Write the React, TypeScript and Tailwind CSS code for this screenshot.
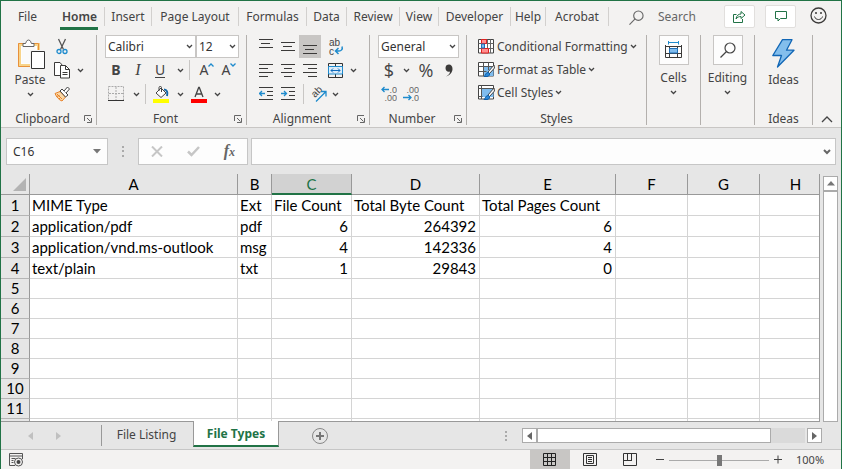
import { ReactNode, useState } from "react";

const TABS = [
  { name: "File", width: "w-[54px]" },
  { name: "Home", width: "w-[50px]", active: true },
  { name: "Insert", width: "w-[47px]" },
  { name: "Page Layout", width: "w-[87px]" },
  { name: "Formulas", width: "w-[68px]" },
  { name: "Data", width: "w-[40px]" },
  { name: "Review", width: "w-[53px]" },
  { name: "View", width: "w-[39px]" },
  { name: "Developer", width: "w-[72px]" },
  { name: "Help", width: "w-[35px]" },
  { name: "Acrobat", width: "w-[63px]" },
];

const COLUMNS = ["A", "B", "C", "D", "E", "F", "G", "H"];

const ROWS = [
  ["MIME Type", "Ext", "File Count", "Total Byte Count", "Total Pages Count"],
  ["application/pdf", "pdf", "6", "264392", "6"],
  ["application/vnd.ms-outlook", "msg", "4", "142336", "4"],
  ["text/plain", "txt", "1", "29843", "0"],
  [],
  [],
  [],
  [],
  [],
  [],
  [],
];

function Chevron() {
  return (
    <svg width="7" height="5" viewBox="0 0 7 5" fill="none" className="shrink-0">
      <path d="M1 1l2.500 2.500L6 1" stroke="#444" strokeWidth="1.300" />
    </svg>
  );
}

function Divider() {
  return <div className="h-5 w-px shrink-0 bg-[#c8c6c4]" />;
}

function Tool({
  label,
  width = "w-[22px]",
  children,
}: {
  label: string;
  width?: string;
  children: ReactNode;
}) {
  return (
    <button
      aria-label={label}
      className={`flex h-full shrink-0 items-center justify-center ${width}`}
    >
      {children}
    </button>
  );
}

function Group({
  label,
  width,
  launcher,
  children,
}: {
  label?: string;
  width: string;
  launcher?: boolean;
  children: ReactNode;
}) {
  return (
    <section className={`flex flex-col border-r border-[#b3b0ad] ${width}`}>
      <div className="h-[78px]">{children}</div>
      <div className="flex h-3 items-center">
        <div className="flex-1 text-center leading-3">{label}</div>
        {launcher && (
          <button aria-label={`${label} settings`} className="mr-1">
            <svg width="8" height="8" viewBox="0 0 8 8" fill="none" stroke="#666">
              <path d="M.5 6V.5H7M3 3l3.500 3.500M7.500 3v4.500H3" />
            </svg>
          </button>
        )}
      </div>
    </section>
  );
}

function Lines({ rows }: { rows: [number, number, number][] }) {
  return (
    <svg width="14" height="15" viewBox="0 0 14 15" stroke="#3b3a39">
      {rows.map(([x1, x2, y]) => (
        <path key={y} d={`M${x1} ${y + 0.5}H${x2}`} />
      ))}
    </svg>
  );
}

function PasteIcon() {
  return (
    <svg width="28" height="31" viewBox="0 0 28 31" fill="none" className="ml-1">
      <path d="M1.500 5.500h19v21h-19z" fill="#fff" stroke="#f8d48a" strokeWidth="3" />
      <path d="M.5 4.500h20v23H.5z" stroke="#e8913a" />
      <path d="M3.500 7.500h14v17h-14z" fill="#fafafa" />
      <path d="M5 7.500v-3h2.500c.5 0 .5-3.500 3-3.500s2.500 3.500 3 3.500H16v3z" fill="#fff" stroke="#666" />
      <path d="M12 11h16v20H12z" fill="#f3f2f1" />
      <path d="M13.500 12.500h13v17h-13z" fill="#fff" stroke="#333" />
    </svg>
  );
}

function CutIcon() {
  return (
    <svg width="12" height="17" viewBox="0 0 12 17" fill="none">
      <path d="M2.500 1l5 10.500M9.500 1l-5 10.500" stroke="#555" strokeWidth="1.300" />
      <circle cx="3" cy="13.500" r="2" stroke="#1e8bcd" strokeWidth="1.300" />
      <circle cx="9" cy="13.500" r="2" stroke="#1e8bcd" strokeWidth="1.300" />
    </svg>
  );
}

function CopyIcon() {
  return (
    <svg width="17" height="17" viewBox="0 0 17 17" fill="#fff" stroke="#3b3a39">
      <path d="M8.500 3.500L6 .5H.5v13h6" />
      <path d="M6.500 3.500h5l4 4v8.500h-9z" />
      <path d="M11.500 3.500v4h4M8.500 10.500h5M8.500 12.500h5" fill="none" />
    </svg>
  );
}

function BrushIcon() {
  return (
    <svg width="17" height="16" viewBox="0 0 17 16" fill="none">
      <path d="M1 7.500l5-2 5.500 5.500-3.500 4C5 14 2.500 11 1 7.500z" fill="#fbd9a6" stroke="#e8822a" />
      <path d="M3 8l5 5M2.500 10.500l3-1M5 13l2-2" stroke="#e8822a" />
      <path d="M6 5l2-2 6 6-2.500 2z" fill="#fff" stroke="#444" />
      <path d="M10 5l3.500-4 2 2L12 7" fill="#fff" stroke="#444" />
    </svg>
  );
}

function BordersIcon() {
  return (
    <svg width="16" height="16" viewBox="0 0 16 16" stroke="#aaa">
      <path d="M.5.5h15v14H.5zM8 1v13M1 7.500h14" fill="none" strokeDasharray="2 1" />
      <path d="M0 14.500h16" stroke="#333" />
    </svg>
  );
}

function BucketIcon() {
  return (
    <svg width="16" height="17" viewBox="0 0 16 17" fill="none">
      <path d="M3 7l5-5 5 5-5 4.500z" fill="#fff" stroke="#444" />
      <path d="M6 5V1.500c0-1.500 2.500-1.500 2.500 0V6" stroke="#444" />
      <path d="M11 3.500c3 0 4 3 3 6.500" stroke="#1569a8" strokeWidth="2" />
      <path d="M0 13h16v4H0z" fill="#ff0" />
    </svg>
  );
}

function FontColorIcon() {
  return (
    <svg width="16" height="17" viewBox="0 0 16 17" fill="none">
      <path d="M4 11L7.700 1.500h.6L12 11M5.200 8h5.600" stroke="#444" strokeWidth="1.300" />
      <path d="M0 13h16v4H0z" fill="red" />
    </svg>
  );
}

function WrapIcon() {
  return (
    <svg width="16" height="20" viewBox="0 0 16 20" fill="none" className="font-['Liberation_Sans',sans-serif] text-[10px]">
      <text x="1" y="9" fill="#444">ab</text>
      <text x="1" y="18" fill="#444">c</text>
      <path d="M14 9.500c1 3-1 4.500-3 4.500H7.500M10.500 11l-3 3 3 3" stroke="#1e8bcd" strokeWidth="1.500" />
    </svg>
  );
}

function MergeIcon() {
  return (
    <svg width="15" height="15" viewBox="0 0 15 15" fill="none" stroke="#333">
      <path d="M.5.5h14v14H.5zM7.500 0v4M7.500 11v4" />
      <path d="M.5 3.500h14v7.500H.5z" fill="#dcecf9" stroke="#1e8bcd" />
      <path d="M3 7.500h9M5 5.500l-2 2 2 2M10 5.500l2 2-2 2" stroke="#0f6cbd" />
    </svg>
  );
}

function IndentIcon({ decrease }: { decrease?: boolean }) {
  return (
    <svg width="14" height="14" viewBox="0 0 14 14" fill="none" stroke="#3b3a39">
      <path d="M0 .5h14M8 4.500h6M8 8.500h6M0 12.500h14" />
      <path
        d={decrease ? "M6 6.500H.5M3 4L.5 6.500 3 9" : "M0 6.500h5.500M3 4l2.500 2.500L3 9"}
        stroke="#1e8bcd"
        strokeWidth="1.300"
      />
    </svg>
  );
}

function OrientationIcon() {
  return (
    <svg width="22" height="22" viewBox="0 0 22 22" fill="none" className="shrink-0 font-['Liberation_Sans',sans-serif] text-[10px]">
      <text fill="#444" transform="translate(8 15) rotate(-45)">ab</text>
      <path d="M9 18.500L18.500 9M14 8.500h5v5" stroke="#1e8bcd" strokeWidth="1.300" />
    </svg>
  );
}

function DecimalIcon({ increase }: { increase?: boolean }) {
  return (
    <svg width="16" height="20" viewBox="0 0 16 20" fill="none" className="font-['Liberation_Sans',sans-serif] text-[9px]">
      <text x="16" y="9" textAnchor="end" fill="#666">{increase ? ".0" : ".00"}</text>
      <text x="16" y="17" textAnchor="end" fill="#666">{increase ? ".00" : ".0"}</text>
      <path
        d={increase ? "M8 5.500H1M3.500 3L1 5.500 3.500 8" : "M0 13.500h8M5.500 11L8 13.500 5.500 16"}
        stroke="#1e8bcd"
        strokeWidth="1.300"
      />
    </svg>
  );
}

function ConditionalIcon() {
  return (
    <svg width="16" height="15" viewBox="0 0 16 15" fill="none">
      <path d="M.5.5h15v13.500H.5z" fill="#fff" stroke="#444" />
      <path d="M3.500.5V14M9.500.5V14M12.500.5V14M.5 4.500h15M.5 9.500h15" stroke="#666" />
      <path d="M3.500.5h5v4h-5zM3.500 9.500h7V14h-7z" fill="#ff8f8f" stroke="#e02020" />
      <path d="M3.500 5h3v4h-3z" fill="#7fbcee" stroke="#1e6fb8" />
    </svg>
  );
}

function TableStyleIcon({ full }: { full?: boolean }) {
  return (
    <svg width="17" height="15" viewBox="0 0 17 15" fill="none">
      <path d="M.5.5h15v13.500H.5z" fill="#fff" stroke="#444" />
      <path d={full ? "M3 3.500h12.500V12H3z" : "M5.500 4.500h10V14h-10z"} fill="#7fbcee" />
      <path d={full ? "M3.500.5V14M.5 3.500h15M.5 11.500h4" : "M5.500.5V14M10.500.5V8M.5 4.500h15M.5 9.500h8"} stroke="#555" />
      <path d="M16 3l-6 7 1.500 1.500L16.500 6z" fill="#fff" stroke="#444" />
      <path d="M6 14.500c1.500-1 1.500-4 4-4s2 4-1 4z" fill="#2b88d8" stroke="#0f5ea8" />
    </svg>
  );
}

function CellsIcon() {
  return (
    <svg width="17" height="18" viewBox="0 0 17 18" fill="none">
      <path d="M4 1.500h9M3.500 0v3.500M13.500 0v3.500" stroke="#1e8bcd" />
      <path d="M.5 4v12.500h16V4M.5 5.500h16M.5 12.500h16M4.500 6v10.500M12.500 6v10.500" stroke="#3b3a39" />
      <path d="M4.500 7.500h8v4.500h-8z" fill="#7fbcee" stroke="#1e6fb8" />
    </svg>
  );
}

function SearchIcon({ size, color }: { size: number; color: string }) {
  return (
    <svg width={size} height={size} viewBox="0 0 16 16" fill="none" stroke={color} strokeWidth="1.200">
      <circle cx="10" cy="6" r="5" />
      <path d="M6.500 9.500L.5 15.500" />
    </svg>
  );
}

function Collapsed({ label, icon }: { label: string; icon: ReactNode }) {
  return (
    <button className="flex w-full flex-col items-center">
      <span className="flex h-[30px] w-[30px] items-center justify-center border border-[#c8c6c4] bg-[#fdfdfd]">
        {icon}
      </span>
      <span className="mt-[5px] mb-1 leading-4">{label}</span>
      <Chevron />
    </button>
  );
}

function TabStrip() {
  return (
    <header className="flex h-[34px] items-start text-[#444]">
      <nav className="flex pt-1.5">
        {TABS.map(({ name, width, active }) => (
          <button key={name} className={`relative h-[19px] shrink-0 whitespace-nowrap border-r leading-[19px] ${width} ${name === "File" ? "border-transparent" : "border-[#d2d0ce]"} ${active ? "font-semibold" : ""}`}>
            {name}
            {active && <span className="absolute right-1.5 -bottom-1 h-[3px] w-[38px] bg-[#217346]" />}
          </button>
        ))}
      </nav>
      <div className="flex-1" />
      <label className="flex items-center gap-3.5 pt-2 text-[#666]">
        <SearchIcon size={15} color="#666" />
        <input type="text" placeholder="Search" className="w-[54px] bg-transparent leading-4 outline-none placeholder:text-[#666]" />
      </label>
      <div className="flex gap-2.5 pt-1 pl-3">
        <button aria-label="Share" className="flex h-[23px] w-[31px] items-center justify-center rounded-xs border border-[#e1dfdd] bg-white">
          <svg width="13" height="13" viewBox="0 0 13 13" fill="none" stroke="#217346">
            <path d="M3.500 4.500h-3v8h9V9" />
            <path d="M3 9c.500-3.500 2.500-5 5-5V1.500L12 5 8 8.500V6.500C6 6.500 4.500 7 3 9z" />
          </svg>
        </button>
        <button aria-label="Comments" className="flex h-[23px] w-[31px] items-center justify-center rounded-xs border border-[#e1dfdd] bg-white">
          <svg width="12" height="11" viewBox="0 0 12 11" fill="none" stroke="#217346">
            <path d="M.5.5h11v7h-6l-2.500 2.500V7.500H.5z" />
          </svg>
        </button>
      </div>
      <button aria-label="Feedback" className="mt-1.5 mr-3.5 ml-3.5">
        <svg width="17" height="17" viewBox="0 0 17 17" fill="none" stroke="#3b3a39">
          <circle cx="8.500" cy="8.500" r="7.500" strokeWidth="1.300" />
          <path d="M4.500 9.500c1 4 7 4 8 0" />
          <circle cx="6" cy="6" r="1" fill="#3b3a39" stroke="none" />
          <circle cx="11" cy="6" r="1" fill="#3b3a39" stroke="none" />
        </svg>
      </button>
    </header>
  );
}

function Combo({ label, value, options, width }: { label: string; value: string; options: string[]; width: string }) {
  return (
    <div className={`relative h-[23px] shrink-0 ${width}`}>
      <select aria-label={label} defaultValue={value} className="h-full w-full appearance-none border border-[#c8c6c4] bg-white pl-0.5 text-[#333] outline-none">
        {options.map((o) => (
          <option key={o}>{o}</option>
        ))}
      </select>
      <span className="pointer-events-none absolute top-0 right-[3px] flex h-full items-center">
        <Chevron />
      </span>
    </div>
  );
}

function Ribbon() {
  return (
    <div className="flex border-b border-[#c8c6c4] pb-[2px] text-[#444]">
      <Group label="Clipboard" width="w-24" launcher>
        <div className="flex h-full">
          <button className="ml-[7px] flex w-11 flex-col items-center pt-1">
            <PasteIcon />
            <span className="mt-0.5 mb-1 leading-4">Paste</span>
            <Chevron />
          </button>
          <div className="flex flex-col">
            <div className="flex h-[23px]"><Tool label="Cut" width="w-5"><CutIcon /></Tool></div>
            <div className="flex h-6">
              <Tool label="Copy" width="w-5"><CopyIcon /></Tool>
              <Tool label="Copy options" width="w-4"><Chevron /></Tool>
            </div>
            <div className="flex h-6"><Tool label="Format Painter" width="w-5"><BrushIcon /></Tool></div>
          </div>
        </div>
      </Group>

      <Group label="Font" width="w-[150px]" launcher>
        <div className="flex pl-2">
          <Combo label="Font name" value="Calibri" options={["Calibri", "Arial", "Cambria"]} width="w-[91px]" />
          <Combo label="Font size" value="12" options={["10", "11", "12", "14"]} width="w-[43px]" />
        </div>
        <div className="flex h-6 items-center pl-2">
          <Tool label="Bold"><b className="text-sm">B</b></Tool>
          <Tool label="Italic"><i className="font-['Liberation_Serif',serif] text-base">I</i></Tool>
          <Tool label="Underline"><span className="border-b border-[#444] text-sm leading-[15px]">U</span></Tool>
          <Tool label="Underline options" width="w-[18px]"><Chevron /></Tool>
          <Divider />
          <Tool label="Grow font" width="w-[26px]">
            <span className="pl-2 text-sm">A</span>
            <svg width="6" height="4" viewBox="0 0 6 4" fill="none" className="mb-2.5"><path d="M.5 3.500L3 1l2.500 2.500" stroke="#1e8bcd" strokeWidth="1.300" /></svg>
          </Tool>
          <Tool label="Shrink font">
            <span className="pl-1 text-sm">A</span>
            <svg width="6" height="4" viewBox="0 0 6 4" fill="none" className="mb-2.5"><path d="M.5.5L3 3 5.500.5" stroke="#1e8bcd" strokeWidth="1.300" /></svg>
          </Tool>
        </div>
        <div className="flex h-6 items-center pl-2">
          <Tool label="Borders"><BordersIcon /></Tool>
          <Tool label="Border options" width="w-[18px]"><Chevron /></Tool>
          <Divider />
          <Tool label="Fill color" width="w-[30px]"><BucketIcon /></Tool>
          <Tool label="Fill options" width="w-2"><Chevron /></Tool>
          <Tool label="Font color" width="w-[29px]"><FontColorIcon /></Tool>
          <Tool label="Font color options" width="w-2"><Chevron /></Tool>
        </div>
      </Group>

      <Group label="Alignment" width="w-[123px]" launcher>
        <div className="flex h-[23px] items-center pl-2">
          <Tool label="Top align"><Lines rows={[[0, 14, 0], [2, 11, 4], [0, 14, 8]]} /></Tool>
          <Tool label="Middle align"><Lines rows={[[0, 14, 3], [2, 11, 7], [0, 14, 11]]} /></Tool>
          <span className="flex h-full bg-[#c8c6c4]">
            <Tool label="Bottom align"><Lines rows={[[0, 14, 6], [2, 11, 10], [0, 14, 14]]} /></Tool>
          </span>
          <Tool label="Wrap text" width="w-[30px]"><WrapIcon /></Tool>
        </div>
        <div className="flex h-6 items-center pl-2">
          <Tool label="Align left"><Lines rows={[[0, 14, 1], [0, 9, 5], [0, 14, 9], [0, 9, 13]]} /></Tool>
          <Tool label="Center"><Lines rows={[[0, 14, 1], [3, 11, 5], [0, 14, 9], [3, 11, 13]]} /></Tool>
          <Tool label="Align right"><Lines rows={[[0, 14, 1], [5, 14, 5], [0, 14, 9], [5, 14, 13]]} /></Tool>
          <Tool label="Merge" width="w-[28px]"><MergeIcon /></Tool>
          <Tool label="Merge options" width="w-2"><Chevron /></Tool>
        </div>
        <div className="flex h-6 items-center pl-2">
          <Tool label="Decrease indent"><IndentIcon decrease /></Tool>
          <Tool label="Increase indent"><IndentIcon /></Tool>
          <div className="pl-1"><Divider /></div>
          <Tool label="Orientation" width="w-[27px]"><OrientationIcon /></Tool>
          <Tool label="Orientation options" width="w-2"><Chevron /></Tool>
        </div>
      </Group>

      <Group label="Number" width="w-[97px]" launcher>
        <div className="flex pl-2">
          <Combo label="Number format" value="General" options={["General", "Number", "Currency"]} width="w-[81px]" />
        </div>
        <div className="flex h-6 items-center pl-2 font-['Open_Sans',sans-serif] text-lg">
          <Tool label="Accounting format">$</Tool>
          <Tool label="Currency options" width="w-3"><Chevron /></Tool>
          <Tool label="Percent" width="w-7">%</Tool>
          <Tool label="Comma style" width="w-[18px]">
            <svg width="8" height="13" viewBox="0 0 8 13" fill="#3b3a39"><path d="M1 12.500C4 11 5 9 5 7.500 2.500 8.500.5 6.500.5 4S2 .5 4 .5s3.500 1.500 3.500 4.500S5 11.500 1 12.500z" /></svg>
          </Tool>
        </div>
        <div className="flex h-6 items-center pl-2">
          <Tool label="Increase decimal"><DecimalIcon increase /></Tool>
          <Tool label="Decrease decimal"><DecimalIcon /></Tool>
        </div>
      </Group>

      <Group label="Styles" width="min-w-[180px] flex-1">
        <div className="pl-[11px]">
          {[
            { name: "Conditional Formatting", icon: <ConditionalIcon /> },
            { name: "Format as Table", icon: <TableStyleIcon /> },
            { name: "Cell Styles", icon: <TableStyleIcon full /> },
          ].map(({ name, icon }) => (
            <button key={name} className="flex h-[23px] items-center gap-0.5 whitespace-nowrap">
              <span className="w-[17px]">{icon}</span>
              {name}
              <Chevron />
            </button>
          ))}
        </div>
      </Group>

      <Group width="w-[54px]"><Collapsed label="Cells" icon={<CellsIcon />} /></Group>
      <Group width="w-[54px]"><Collapsed label="Editing" icon={<SearchIcon size={16} color="#444" />} /></Group>
      <Group label="Ideas" width="w-[58px]">
        <button className="flex w-full flex-col items-center pt-1">
          <svg width="23" height="29" viewBox="0 0 23 29">
            <path d="M10.500.7H20l-5.500 10.500h7.500L5.500 28l4-11.500H.8z" fill="#83beec" stroke="#1066b5" strokeWidth="1.300" strokeLinejoin="round" />
          </svg>
          <span className="mt-1 leading-4">Ideas</span>
        </button>
      </Group>
      <div className="flex w-7 items-end pb-0.5 pl-2">
        <button aria-label="Collapse ribbon">
          <svg width="12" height="7" viewBox="0 0 12 7" fill="none"><path d="M1 6l5-5 5 5" stroke="#444" strokeWidth="1.300" /></svg>
        </button>
      </div>
    </div>
  );
}

function FormulaBar() {
  return (
    <div className="flex items-center pt-2.5 pr-[5px] pb-[9px] pl-[5px]">
      <div className="flex h-[27px] w-[102px] items-center border border-[#c6c6c6] bg-[#fdfdfd] pr-1.5 pl-1.5">
        <input type="text" aria-label="Name box" defaultValue="C16" className="min-w-0 flex-1 bg-transparent text-[#333] outline-none" />
        <button aria-label="Named ranges">
          <svg width="8" height="5" viewBox="0 0 8 5" fill="#777"><path d="M0 0h8L4 4.500z" /></svg>
        </button>
      </div>
      <svg width="30" height="11" viewBox="0 0 30 11" fill="#aaa">
        <path d="M14 0h2v2h-2zM14 4h2v2h-2zM14 9h2v2h-2z" />
      </svg>
      <div className="flex h-[27px] w-[110px] items-center justify-between border border-[#c6c6c6] bg-[#fdfdfd] pr-3 pl-3">
        <button aria-label="Cancel">
          <svg width="12" height="11" viewBox="0 0 12 11" fill="none" stroke="#c6c6c6" strokeWidth="2"><path d="M1 .5l10 10M11 .5l-10 10" /></svg>
        </button>
        <button aria-label="Enter">
          <svg width="13" height="11" viewBox="0 0 13 11" fill="none" stroke="#c6c6c6" strokeWidth="2.500"><path d="M1 5.500L4.500 9 12 1" /></svg>
        </button>
        <button aria-label="Insert function" className="font-['Liberation_Serif',serif] text-base leading-4 font-bold text-[#666] italic">
          f<span className="text-xs">x</span>
        </button>
      </div>
      <div className="ml-[3px] flex h-[27px] flex-1 items-center border border-[#c6c6c6] bg-[#fdfdfd] pr-1">
        <input type="text" aria-label="Formula" className="min-w-0 flex-1 bg-transparent px-2 outline-none" />
        <button aria-label="Expand formula bar">
          <svg width="8" height="6" viewBox="0 0 8 6" fill="none" stroke="#666" strokeWidth="2"><path d="M1 1l3 3 3-3" /></svg>
        </button>
      </div>
    </div>
  );
}

function Sheet() {
  return (
    <div className="flex flex-1">
      <div className="min-w-0 flex-1 border-r border-b border-[#999] bg-white">
        <table className="w-full table-fixed border-separate border-spacing-0 font-['Lato',sans-serif] text-[15px] leading-[19px] text-black [font-variant-ligatures:none]">
          <colgroup>
            <col className="w-[29px]" />
            <col className="w-[208px]" />
            <col className="w-[34px]" />
            <col className="w-20" />
            <col className="w-32" />
            <col className="w-[136px]" />
            <col className="w-[72px]" />
            <col className="w-[72px]" />
            <col />
          </colgroup>
          <thead>
            <tr className="h-[21px] bg-[#e6e6e6]">
              <td className="border-r border-b border-[#999] p-0">
                <svg width="13" height="13" viewBox="0 0 13 13" className="ml-3"><path d="M13 0v13H0z" fill="#b3b3b3" /></svg>
              </td>
              {COLUMNS.map((c) => (
                <th
                  key={c}
                  scope="col"
                  className={`px-0 pb-0 text-center font-normal ${c === "H" ? "pl-3" : "border-r"} ${
                    c === "C"
                      ? "border-b-2 border-r-[#999] border-b-[#217346] bg-[#d2d2d2] pt-0.5 leading-[17px] text-[#217346]"
                      : "border-b border-[#999] pt-px"
                  }`}
                >
                  {c}
                </th>
              ))}
            </tr>
          </thead>
          <tbody>
            {ROWS.map((row, i) => (
              <tr key={i} className={row.length ? "h-[21px]" : "h-5"}>
                <th scope="row" className="border-r border-b border-r-[#999] border-b-[#b5b5b5] bg-[#e6e6e6] p-0 text-center font-normal">
                  {i + 1}
                </th>
                {COLUMNS.map((c, j) => (
                  <td
                    key={c}
                    className={`border-b border-[#d4d4d4] py-0 pr-[3px] pl-0.5 whitespace-nowrap ${c === "H" ? "" : "border-r"} ${i > 0 && j > 1 ? "text-right" : "text-left"}`}
                  >
                    {row[j]}
                  </td>
                ))}
              </tr>
            ))}
            <tr className="h-0.5">
              <td className="border-r border-[#999] bg-[#e6e6e6] p-0" />
              {COLUMNS.map((c) => (
                <td key={c} className={`border-[#d4d4d4] p-0 ${c === "H" ? "" : "border-r"}`} />
              ))}
            </tr>
          </tbody>
        </table>
      </div>
      <div className="ml-[3px] mr-[3px] flex w-[15px] flex-col pt-0.5">
        <button aria-label="Scroll up" className="flex h-[15px] items-center justify-center border border-[#ababab] bg-white">
          <svg width="8" height="5" viewBox="0 0 8 5" fill="#777"><path d="M4 0l4 4.500H0z" /></svg>
        </button>
        <div className="flex-1 border border-[#ababab] bg-white" />
      </div>
    </div>
  );
}

function SheetTabs() {
  return (
    <div className="flex h-7 border-b border-[#c6c6c6]">
      <div className="flex w-[100px] items-center gap-[23px] pl-[27px]">
        <button aria-label="Previous sheet">
          <svg width="5" height="8" viewBox="0 0 5 8" fill="#c0c0c0"><path d="M5 0v8L0 4z" /></svg>
        </button>
        <button aria-label="Next sheet">
          <svg width="5" height="8" viewBox="0 0 5 8" fill="#c0c0c0"><path d="M0 0v8l5-4z" /></svg>
        </button>
      </div>
      <button className="my-[3px] w-[92px] border-l border-[#999] pr-0.5 pb-0.5 leading-4 text-[#444]">File Listing</button>
      <button className="-mt-px mb-[2px] w-[86px] border-x border-b-2 border-x-[#999] border-b-[#217346] bg-white pt-px leading-4 font-bold text-[#217346]">
        File Types
      </button>
      <button aria-label="New sheet" className="ml-8">
        <svg width="18" height="18" viewBox="0 0 18 18" fill="none" stroke="#888">
          <circle cx="9" cy="9" r="7.500" />
          <path d="M9 5v8M5 9h8" stroke="#777" strokeWidth="2" />
        </svg>
      </button>
      <div className="flex-1" />
      <div className="flex items-center pr-[19px]">
        <svg width="2" height="10" viewBox="0 0 2 10" fill="#aaa" className="mr-[15px]">
          <path d="M0 0h2v2H0zM0 4h2v2H0zM0 8h2v2H0z" />
        </svg>
        <button aria-label="Scroll left" className="flex h-[15px] w-[15px] items-center justify-center border border-[#ababab] bg-white">
          <svg width="5" height="8" viewBox="0 0 5 8" fill="#666"><path d="M5 0v8L0 4z" /></svg>
        </button>
        <div className="mr-0.5 h-[15px] w-[268px] bg-[#dadada]">
          <div className="h-full w-[234px] border border-[#ababab] bg-white" />
        </div>
        <button aria-label="Scroll right" className="flex h-[15px] w-[15px] items-center justify-center border border-[#ababab] bg-white">
          <svg width="5" height="8" viewBox="0 0 5 8" fill="#666"><path d="M0 0v8l5-4z" /></svg>
        </button>
      </div>
    </div>
  );
}

function StatusBar() {
  const [zoom, setZoom] = useState(100);
  return (
    <footer className="flex h-5 items-center bg-[#f3f2f1] text-[#444]">
      <button aria-label="Record macro" className="ml-2">
        <svg width="15" height="14" viewBox="0 0 15 14" fill="none" stroke="#555">
          <path d="M6 12.500H.5V.5h13V6M.5 3h13M2.500 5.500h4M2.500 7.500h2M2.500 9.500h2" />
          <circle cx="9.500" cy="9" r="4" fill="#f3f2f1" />
          <circle cx="9.500" cy="9" r="2" fill="#444" stroke="none" />
        </svg>
      </button>
      <div className="flex-1" />
      <button aria-label="Normal view" className="flex h-full w-10 items-center justify-center bg-[#c8c6c4]">
        <svg width="14" height="14" viewBox="0 0 14 14" fill="none" stroke="#222"><path d="M.5.5h12v12H.5zM4.500 0v13M8.500 0v13M0 4.500h13M0 8.500h13" /></svg>
      </button>
      <button aria-label="Page layout view" className="flex h-full w-10 items-center justify-center">
        <svg width="14" height="14" viewBox="0 0 14 14" fill="none" stroke="#333"><path d="M.5.5h13v12H.5zM3.500 2.500h7v8h-7zM5 4.500h4M5 6.500h4M5 8.500h4" /></svg>
      </button>
      <button aria-label="Page break view" className="flex h-full w-10 items-center justify-center">
        <svg width="14" height="14" viewBox="0 0 14 14" fill="none" stroke="#333"><path d="M.5.5h13v12H.5zM4.500.5v7M8.500.5v7M0 7.500h9" /></svg>
      </button>
      <button aria-label="Zoom out" className="ml-1.5">
        <svg width="8" height="10" viewBox="0 0 8 10" stroke="#444"><path d="M0 4.500h8" /></svg>
      </button>
      <input
        type="range"
        aria-label="Zoom"
        min={10}
        max={190}
        value={zoom}
        onChange={(e) => setZoom(Number(e.target.value))}
        className="mx-[5px] h-3 w-[100px] appearance-none bg-transparent [&::-webkit-slider-runnable-track]:h-px [&::-webkit-slider-runnable-track]:bg-[#aaa] [&::-webkit-slider-thumb]:-mt-[5px] [&::-webkit-slider-thumb]:h-[11px] [&::-webkit-slider-thumb]:w-[5px] [&::-webkit-slider-thumb]:appearance-none [&::-webkit-slider-thumb]:bg-[#777]"
      />
      <button aria-label="Zoom in">
        <svg width="8" height="10" viewBox="0 0 8 10" stroke="#444"><path d="M0 4.500h8M4 .5v8" /></svg>
      </button>
      <span className="ml-3.5 w-[45px] text-[11px] leading-4">{zoom}%</span>
    </footer>
  );
}

export default function App() {
  return (
    <div className="flex min-h-screen flex-col border-x border-t border-[#217346] bg-[#e6e6e6] font-['Noto_Sans',sans-serif] text-xs">
      <div className="bg-[#f3f2f1]">
        <TabStrip />
        <Ribbon />
      </div>
      <FormulaBar />
      <Sheet />
      <SheetTabs />
      <StatusBar />
    </div>
  );
}
